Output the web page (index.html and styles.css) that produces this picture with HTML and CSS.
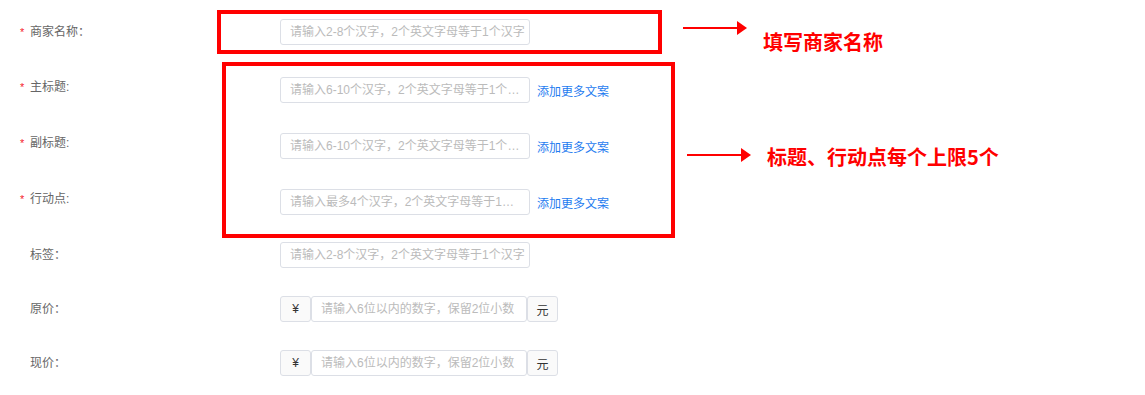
FILE: index.html
```html
<!DOCTYPE html>
<html lang="zh-CN">
<head>
    <meta charset="UTF-8">
    <meta name="viewport" content="width=device-width, initial-scale=1.0">
    <title>商家信息</title>
    <link rel="stylesheet" href="styles.css">
</head>
<body>
    <div class="page">
        <form class="ad-form">
            <div class="form-row first">
                <label class="form-label"><span class="req">*</span>商家名称：</label>
                <input class="text-input" type="text" placeholder="请输入2-8个汉字，2个英文字母等于1个汉字">
            </div>
            <div class="form-row copy">
                <label class="form-label"><span class="req">*</span>主标题:</label>
                <input class="text-input" type="text" placeholder="请输入6-10个汉字，2个英文字母等于1个汉字">
                <a href="#" class="add-more">添加更多文案</a>
            </div>
            <div class="form-row copy">
                <label class="form-label"><span class="req">*</span>副标题:</label>
                <input class="text-input" type="text" placeholder="请输入6-10个汉字，2个英文字母等于1个汉字">
                <a href="#" class="add-more">添加更多文案</a>
            </div>
            <div class="form-row copy copy-last">
                <label class="form-label"><span class="req">*</span>行动点:</label>
                <input class="text-input" type="text" placeholder="请输入最多4个汉字，2个英文字母等于1个汉字">
                <a href="#" class="add-more">添加更多文案</a>
            </div>
            <div class="form-row">
                <label class="form-label">标签：</label>
                <input class="text-input" type="text" placeholder="请输入2-8个汉字，2个英文字母等于1个汉字">
            </div>
            <div class="form-row">
                <label class="form-label">原价：</label>
                <div class="input-group">
                    <span class="addon">¥</span>
                    <input class="text-input price" type="text" placeholder="请输入6位以内的数字，保留2位小数">
                    <span class="addon">元</span>
                </div>
            </div>
            <div class="form-row">
                <label class="form-label">现价：</label>
                <div class="input-group">
                    <span class="addon">¥</span>
                    <input class="text-input price" type="text" placeholder="请输入6位以内的数字，保留2位小数">
                    <span class="addon">元</span>
                </div>
            </div>
        </form>

        <!-- annotations drawn over the screenshot -->
        <div class="mark mark-name"></div>
        <div class="mark mark-copy"></div>

        <div class="note note-name">
            <span class="arrow"></span>
            <span class="note-text">填写商家名称</span>
        </div>
        <div class="note note-copy">
            <span class="arrow"></span>
            <span class="note-text">标题、行动点每个上限5个</span>
        </div>
    </div>
</body>
</html>
```

FILE: styles.css
```css
body {
    margin: 0;
    background-color: #fff;
    font-family: "Liberation Sans", "Noto Sans CJK SC", sans-serif;
    font-size: 12px;
    color: #666;
}

.page {
    position: relative;
    width: 1145px;
    height: 395px;
}

.ad-form {
    padding: 19px 0 0 20px;
}

.form-row {
    display: flex;
    align-items: center;
    height: 26px;
    margin-bottom: 28px;
}

.form-row.first {
    margin-bottom: 32px;
}

.form-row.copy {
    margin-bottom: 30px;
}

.form-row.copy-last {
    margin-bottom: 27px;
}

.form-label {
    width: 250px;
    padding-left: 10px;
    line-height: 20px;
    color: #666;
}

.form-row.copy .form-label {
    align-self: flex-start;
}

.req {
    display: inline-block;
    width: 10px;
    margin-left: -10px;
    color: #f5222d;
    font-size: 11px;
}

.text-input {
    box-sizing: border-box;
    width: 250px;
    height: 26px;
    padding: 0 4px 0 9px;
    border: 1px solid #dcdfe6;
    border-radius: 3px;
    font-family: inherit;
    font-size: 12px;
    color: #333;
    outline: none;
    text-overflow: ellipsis;
}

.text-input::placeholder {
    color: #bbb;
}

.add-more {
    margin-left: 7px;
    color: #1f7cf0;
    text-decoration: none;
}

.input-group {
    display: flex;
    height: 26px;
}

.addon {
    box-sizing: border-box;
    display: flex;
    align-items: center;
    justify-content: center;
    width: 31px;
    height: 26px;
    background-color: #fafafa;
    border: 1px solid #dcdfe6;
    border-radius: 3px;
    color: #333;
}

.text-input.price {
    width: 216px;
}

/* red annotation boxes */
.mark {
    position: absolute;
    box-sizing: border-box;
    border: 4px solid #ff0000;
}

.mark-name {
    left: 217px;
    top: 10px;
    width: 445px;
    height: 44px;
}

.mark-copy {
    left: 222px;
    top: 62px;
    width: 453px;
    height: 176px;
}

.note {
    position: absolute;
    display: flex;
    align-items: flex-start;
}

.note-name {
    left: 683px;
    top: 21px;
}

.note-copy {
    left: 687px;
    top: 144px;
}

.arrow {
    position: relative;
    width: 54px;
    height: 2px;
    background-color: #ff0000;
    margin-right: 10px;
}

.arrow::after {
    content: "";
    position: absolute;
    right: -10px;
    top: -6px;
    border-left: 10px solid #ff0000;
    border-top: 7px solid transparent;
    border-bottom: 7px solid transparent;
}

.note-name .arrow {
    margin-top: 6px;
}

.note-copy .arrow {
    margin-top: 10px;
}

.note-text {
    color: #ff0000;
    font-family: "Noto Sans CJK SC", sans-serif;
    font-size: 20px;
    line-height: 26px;
    font-weight: bold;
    margin-left: 16px;
}

.note-name .note-text {
    margin-top: 8px;
}
```
